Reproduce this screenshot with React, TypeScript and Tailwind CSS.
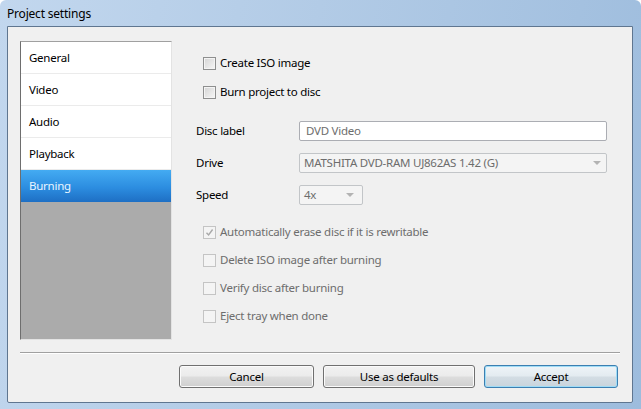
import React from "react";

const font = { fontFamily: '"Noto Sans", "Open Sans", sans-serif' };

function Checkbox({ checked, disabled }: { checked?: boolean; disabled?: boolean }) {
  return (
    <span
      className={`relative flex h-[13px] w-[13px] shrink-0 items-center justify-center border ${
        disabled
          ? "border-[#c4c4c4] bg-[#f4f4f4]"
          : "border-[#8e8f8f] bg-gradient-to-br from-[#d4d4d4] to-[#f7f7f7] shadow-[inset_0_0_0_1px_#f4f4f4]"
      }`}
    >
      {checked && (
        <svg width="9" height="9" viewBox="0 0 9 9">
          <path d="M1.5 4.8 L3.6 7 L7.6 1.5" fill="none" stroke="#a9a9a9" strokeWidth="1.4" />
        </svg>
      )}
    </span>
  );
}

function CheckRow({
  label,
  checked,
  disabled,
  mt,
}: {
  label: string;
  checked?: boolean;
  disabled?: boolean;
  mt: string;
}) {
  return (
    <div className={`flex h-[20px] items-center gap-[4px] pl-[7px] ${mt}`}>
      <Checkbox checked={checked} disabled={disabled} />
      <span className={disabled ? "text-[#6d6d6d]" : "text-black"}>{label}</span>
    </div>
  );
}

function Arrow() {
  return (
    <svg width="8" height="4" viewBox="0 0 8 4" className="shrink-0">
      <path d="M0 0 L8 0 L4 4 Z" fill="#b3b3b3" />
    </svg>
  );
}

function Button({ label, width, primary }: { label: string; width: string; primary?: boolean }) {
  return (
    <div
      className={`flex h-[23px] ${width} items-center justify-center rounded-[3px] border text-black ${
        primary
          ? "border-[#3c7fb1] bg-[linear-gradient(#eef4f8_0%,#e3ebf0_48%,#d3dde4_52%,#c9d4dc_100%)] shadow-[inset_0_0_0_1px_#9fdcf6]"
          : "border-[#707070] bg-[linear-gradient(#f2f2f2_0%,#ebebeb_48%,#dddddd_52%,#cfcfcf_100%)] shadow-[inset_0_0_0_1px_#fbfbfb]"
      }`}
    >
      {label}
    </div>
  );
}

export default function App() {
  const items = ["General", "Video", "Audio", "Playback"];
  return (
    <div
      className="flex h-[409px] w-[641px] flex-col overflow-hidden rounded-t-[6px] bg-[linear-gradient(100deg,#c2d7ee_0%,#b2cbe6_45%,#9dbcdd_100%)] text-[11.5px] tracking-[-0.25px]"
      style={font}
    >
      <div className="flex h-[26px] shrink-0 items-center pl-[7px] pt-[1px] text-[12px] tracking-[-0.2px] text-black">
        Project settings
      </div>
      <div className="mb-[6px] ml-[7px] mr-[8px] flex flex-1 flex-col rounded-b-[2px] border border-[#5f7690] bg-[#f0f0f0]">
        <div className="flex pl-[12px] pt-[14px]">
          <div className="flex h-[299px] w-[152px] flex-col border-l border-t border-l-[#6e6e6e] border-t-[#a0a0a0] border-r border-b border-r-[#e3e3e3] border-b-[#e3e3e3] bg-[#ababab]">
            {items.map((it) => (
              <div
                key={it}
                className="flex h-[32px] items-center border-b border-[#ebebeb] bg-white pl-[8px] text-black"
              >
                {it}
              </div>
            ))}
            <div className="flex h-[32px] items-center bg-[linear-gradient(#44abf2_0%,#2c8de0_55%,#1e6fc4_100%)] pl-[8px] text-[#eaf5ff]">
              Burning
            </div>
          </div>
          <div className="ml-[24px] flex flex-1 flex-col">
            <CheckRow label="Create ISO image" mt="mt-[12px]" />
            <CheckRow label="Burn project to disc" mt="mt-[9px]" />
            <div className="mt-[19px] flex h-[20px] items-center">
              <span className="w-[103px] text-black">Disc label</span>
              <div className="flex h-[20px] w-[308px] items-center rounded-[2px] border border-[#abadb3] bg-white pl-[6px] text-[#6d6d6d]">
                DVD Video
              </div>
            </div>
            <div className="mt-[12px] flex h-[20px] items-center">
              <span className="w-[103px] text-black">Drive</span>
              <div className="flex h-[20px] w-[308px] items-center justify-between rounded-[2px] border border-[#c2c5c8] bg-[#f4f4f4] pl-[4px] pr-[5px] text-[#6d6d6d]">
                <span>MATSHITA DVD-RAM UJ862AS 1.42 (G)</span>
                <Arrow />
              </div>
            </div>
            <div className="mt-[12px] flex h-[20px] items-center">
              <span className="w-[103px] text-black">Speed</span>
              <div className="flex h-[20px] w-[64px] items-center justify-between rounded-[2px] border border-[#c2c5c8] bg-[#f4f4f4] pl-[4px] pr-[8px] text-[#6d6d6d]">
                <span>4x</span>
                <Arrow />
              </div>
            </div>
            <CheckRow label="Automatically erase disc if it is rewritable" checked disabled mt="mt-[17px]" />
            <CheckRow label="Delete ISO image after burning" disabled mt="mt-[8px]" />
            <CheckRow label="Verify disc after burning" disabled mt="mt-[8px]" />
            <CheckRow label="Eject tray when done" disabled mt="mt-[8px]" />
          </div>
        </div>
        <div className="ml-[12px] mr-[12px] mt-[12px] h-[2px] border-t border-b border-t-[#a0a0a0] border-b-white" />
        <div className="mr-[14px] mt-[11px] flex justify-end gap-[9px]">
          <Button label="Cancel" width="w-[135px]" />
          <Button label="Use as defaults" width="w-[152px]" />
          <Button label="Accept" width="w-[134px]" primary />
        </div>
      </div>
    </div>
  );
}
